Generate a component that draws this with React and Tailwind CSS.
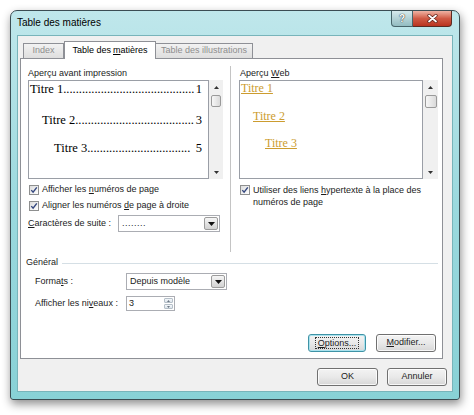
function Check() {
  return (
    <div className="w-[10px] h-[10px] shrink-0 border border-[#8e8f8f] bg-gradient-to-br from-[#dcdcdc] to-[#ffffff] flex items-center justify-center">
      <svg width="8" height="8" viewBox="0 0 8 8">
        <path d="M1.3 4.1 L3.1 6.2 L6.8 1.3" fill="none" stroke="#33467e" strokeWidth="1.4" />
      </svg>
    </div>
  );
}

function DropArrow() {
  return (
    <div className="w-[14px] h-[13px] border border-[#9c9c9c] rounded-[2px] bg-gradient-to-b from-[#f6f6f6] to-[#d2d2d2] flex items-center justify-center">
      <svg width="7" height="4" viewBox="0 0 7 4">
        <path d="M0 0 H7 L3.5 4 Z" fill="#111" />
      </svg>
    </div>
  );
}

function Scroll({ cls, thumb }) {
  return (
    <div className={cls}>
      <svg className="mt-[6px]" width="5" height="3" viewBox="0 0 5 3">
        <path d="M0 3 H5 L2.5 0 Z" fill="#333" />
      </svg>
      <div className={thumb} />
      <div className="flex-1" />
      <svg className="mb-[5px]" width="5" height="3" viewBox="0 0 5 3">
        <path d="M0 0 H5 L2.5 3 Z" fill="#333" />
      </svg>
    </div>
  );
}

function Leader({ title, num, dots, pad, mt }) {
  return (
    <div className={'flex leading-[16px] h-[16px] pr-[6px] ' + pad + ' ' + mt}>
      <span className="whitespace-nowrap">{title}</span>
      <span className="flex-1 whitespace-nowrap">{'.'.repeat(dots)}</span>
      <span className="whitespace-nowrap">{num}</span>
    </div>
  );
}

export default function App() {
  return (
    <div className="w-[474px] h-[415px] bg-white pt-[10px] pl-[10px] overflow-hidden font-['Liberation_Sans',Arial,sans-serif] text-[9px] text-[#1b1b1b]">
      <div className="w-[450px] h-[390px] rounded-t-[7px] rounded-b-[3px] border border-[#3b4d53] bg-gradient-to-b from-[#bfe7eb] via-[#9bd9de] to-[#88d1d6] shadow-[1px_4px_10px_rgba(0,0,0,0.45)] flex flex-col">
        {/* title bar */}
        <div className="h-[24px] flex items-start pl-[6px] pr-[7px] shrink-0">
          <div className="flex-1 pt-[6px] text-[10px] leading-[12px] text-black">Table des matières</div>
          <div className="flex">
            <div className="w-[22px] h-[16px] border-x border-b border-[#47646a] rounded-bl-[4px] bg-gradient-to-b from-[#d6eaed] via-[#b3d2d6] to-[#93bcc1] flex items-center justify-center text-white font-bold text-[10px] [text-shadow:0_0_1px_#333,0_0_1px_#333]">
              ?
            </div>
            <div className="w-[39px] h-[16px] border-r border-b border-[#5a2a22] rounded-br-[4px] bg-gradient-to-b from-[#eeb3a4] via-[#cf5a45] to-[#b9331f] flex items-center justify-center">
              <svg width="11" height="9" viewBox="0 0 11 9">
                <path d="M2 1.5 L9 7.5 M9 1.5 L2 7.5" stroke="#5a1d14" strokeWidth="3.2" strokeLinecap="round" />
                <path d="M2 1.5 L9 7.5 M9 1.5 L2 7.5" stroke="#ffffff" strokeWidth="1.8" strokeLinecap="round" />
              </svg>
            </div>
          </div>
        </div>

        {/* client area */}
        <div className="mx-[6px] mb-[7px] flex-1 bg-[#f0f0f0] border border-[#78b4ba] flex flex-col">
          {/* tabs */}
          <div className="flex items-end h-[17px] mt-[5px] ml-[5px] shrink-0">
            <div className="w-[41px] h-[15px] border border-b-0 border-[#8e9096] bg-gradient-to-b from-[#f2f2f2] to-[#dedede] text-[#8e8e8e] flex items-center justify-center">
              Index
            </div>
            <div className="relative z-10 -mb-px w-[92px] h-[18px] border border-b-0 border-[#8e9096] bg-white text-black flex items-center justify-center">
              Table des <span className="underline ml-[2px]">m</span>atières
            </div>
            <div className="w-[97px] h-[15px] border border-b-0 border-l-0 border-[#8e9096] bg-gradient-to-b from-[#f2f2f2] to-[#dedede] text-[#8e8e8e] flex items-center justify-center">
              Table des illustrations
            </div>
          </div>

          {/* panel */}
          <div className="ml-[2px] w-[423px] h-[301px] border border-[#8e9096] bg-white flex flex-col pl-[5px] shrink-0">
            <div className="mt-[7px] ml-[2px] h-[186px] flex">
              {/* left column */}
              <div className="w-[195px] flex flex-col">
                <div className="mt-[1px] h-[12px] leading-[12px]">Aperçu avant impression</div>
                <div className="mt-[1px] h-[99px] flex">
                  <div className="w-[181px] border border-[#9a9ea6] bg-white font-['Liberation_Serif','Times_New_Roman',serif] text-[12.5px] text-black">
                    <Leader title="Titre 1" num="1" dots={42} pad="pl-[1px]" mt="mt-0" />
                    <Leader title="Titre 2" num="3" dots={38} pad="pl-[13px]" mt="mt-[15px]" />
                    <Leader title="Titre 3 " num="5" dots={33} pad="pl-[25px]" mt="mt-[12px]" />
                  </div>
                  <Scroll
                    cls="w-[14px] bg-[#f0f0f0] flex flex-col items-center"
                    thumb="mt-[6px] w-[10px] h-[12px] rounded-[2px] border border-[#9a9a9a] bg-gradient-to-r from-[#f7f7f7] to-[#dadada]"
                  />
                </div>
                <div className="mt-[5px] h-[12px] flex items-center pl-[1px]">
                  <Check />
                  <span className="ml-[3px]">Afficher les <span className="underline">n</span>uméros de page</span>
                </div>
                <div className="mt-[4px] h-[12px] flex items-center pl-[1px]">
                  <Check />
                  <span className="ml-[3px]">Aligner les numéros <span className="underline">d</span>e page à droite</span>
                </div>
                <div className="mt-[3px] h-[17px] flex items-center">
                  <span className="w-[90px]"><span className="underline">C</span>aractères de suite :</span>
                  <div className="w-[102px] h-[17px] border border-[#abadb3] bg-white flex items-center justify-between pl-[3px] pr-[1px]">
                    <span className="tracking-[0.5px]">........</span>
                    <DropArrow />
                  </div>
                </div>
              </div>

              {/* separator */}
              <div className="ml-[7px] w-px bg-[#c4c4c4]" />

              {/* right column */}
              <div className="ml-[8px] w-[199px] flex flex-col">
                <div className="mt-[1px] h-[12px] leading-[12px] pl-[1px]">
                  Aperçu <span className="underline">W</span>eb
                </div>
                <div className="mt-[1px] h-[99px] flex">
                  <div className="w-[184px] border border-[#9a9ea6] bg-white font-['Liberation_Serif','Times_New_Roman',serif] text-[12px] text-[#cc9c2f]">
                    <div className="pl-[1px] leading-[14px] mt-[0px]"><span className="underline">Titre 1</span></div>
                    <div className="pl-[13px] leading-[14px] mt-[14px]"><span className="underline">Titre 2</span></div>
                    <div className="pl-[25px] leading-[14px] mt-[13px]"><span className="underline">Titre 3</span></div>
                  </div>
                  <Scroll
                    cls="w-[15px] bg-[#f0f0f0] flex flex-col items-center"
                    thumb="mt-[6px] w-[12px] h-[13px] rounded-[2px] border border-[#9a9a9a] bg-gradient-to-r from-[#f7f7f7] to-[#dadada]"
                  />
                </div>
                <div className="mt-[5px] flex items-start pl-[1px]">
                  <div className="mt-[1px]">
                    <Check />
                  </div>
                  <span className="ml-[3px] leading-[12px]">
                    Utiliser des liens <span className="underline">h</span>ypertexte à la place des numéros de page
                  </span>
                </div>
              </div>
            </div>

            {/* Général */}
            <div className="mt-[5px] h-[12px] flex items-center">
              <span>Général</span>
              <div className="ml-[4px] mr-[4px] flex-1 h-px bg-[#d5dfe5]" />
            </div>
            <div className="mt-[4px] h-[17px] flex items-center pl-[9px]">
              <span className="w-[91px]">Forma<span className="underline">t</span>s :</span>
              <div className="w-[101px] h-[17px] border border-[#abadb3] bg-white flex items-center justify-between pl-[3px] pr-[1px]">
                <span>Depuis modèle</span>
                <DropArrow />
              </div>
            </div>
            <div className="mt-[6px] h-[15px] flex items-center pl-[9px]">
              <span className="w-[91px]">Afficher les ni<span className="underline">v</span>eaux :</span>
              <div className="w-[49px] h-[15px] border border-[#abadb3] bg-white flex items-center justify-between pl-[2px] pr-[1px]">
                <span>3</span>
                <div className="flex flex-col gap-px">
                  <div className="w-[9px] h-[5px] rounded-[1px] border border-[#b5bfc8] bg-gradient-to-b from-[#f4f7fa] to-[#dde5ec] flex items-center justify-center">
                    <svg width="3" height="2" viewBox="0 0 3 2"><path d="M0 2 H3 L1.5 0 Z" fill="#6b7683" /></svg>
                  </div>
                  <div className="w-[9px] h-[5px] rounded-[1px] border border-[#b5bfc8] bg-gradient-to-b from-[#f4f7fa] to-[#dde5ec] flex items-center justify-center">
                    <svg width="3" height="2" viewBox="0 0 3 2"><path d="M0 0 H3 L1.5 2 Z" fill="#6b7683" /></svg>
                  </div>
                </div>
              </div>
            </div>

            <div className="mt-auto mb-[6px] pr-[6px] flex justify-end gap-[10px]">
              <div className="w-[58px] h-[18px] rounded-[3px] border border-[#3f93a6] bg-gradient-to-b from-[#f3f3f3] via-[#e9e9e9] to-[#d7d7d7] shadow-[inset_0_0_0_1px_#a9e2ee] flex items-center justify-center">
                <span className="border border-dotted border-[#333] px-[2px] leading-[10px]">
                  <span className="underline">O</span>ptions...
                </span>
              </div>
              <div className="w-[60px] h-[18px] rounded-[3px] border border-[#707070] bg-gradient-to-b from-[#f3f3f3] via-[#e9e9e9] to-[#d7d7d7] shadow-[inset_0_0_0_1px_rgba(255,255,255,0.8)] flex items-center justify-center">
                <span><span className="underline">M</span>odifier...</span>
              </div>
            </div>
          </div>

          {/* OK / Annuler */}
          <div className="mt-[9px] pr-[5px] flex justify-end gap-[9px]">
            <div className="w-[61px] h-[18px] rounded-[3px] border border-[#707070] bg-gradient-to-b from-[#f3f3f3] via-[#e9e9e9] to-[#d7d7d7] shadow-[inset_0_0_0_1px_rgba(255,255,255,0.8)] flex items-center justify-center">
              OK
            </div>
            <div className="w-[60px] h-[18px] rounded-[3px] border border-[#707070] bg-gradient-to-b from-[#f3f3f3] via-[#e9e9e9] to-[#d7d7d7] shadow-[inset_0_0_0_1px_rgba(255,255,255,0.8)] flex items-center justify-center">
              Annuler
            </div>
          </div>
        </div>
      </div>
    </div>
  );
}
